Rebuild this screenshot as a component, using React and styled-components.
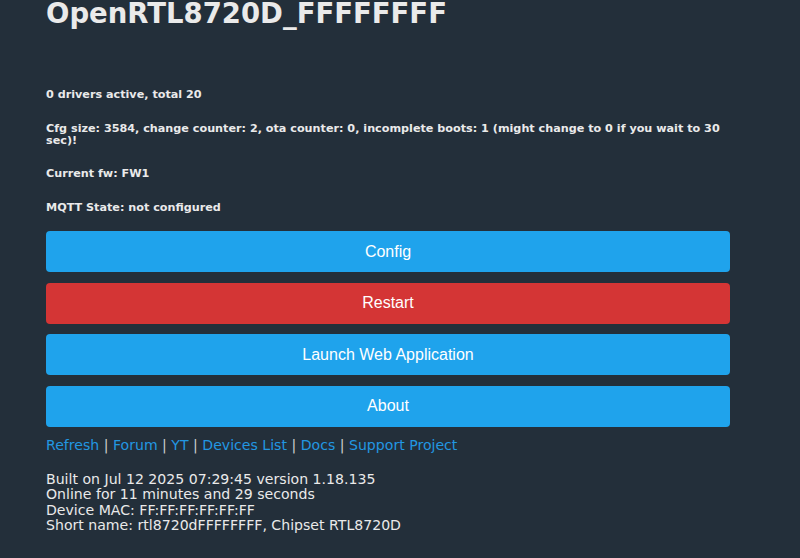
import React from "react";
import styled, { createGlobalStyle } from "styled-components";

const Global = createGlobalStyle`
  html, body { margin: 0; padding: 0; background: #232f3a; }
  body { font-family: "DejaVu Sans", Verdana, sans-serif; color: #eaeaea; }
`;

const Page = styled.div`
  width: 684px;
  padding: 0 0 0 46px;
  display: flex;
  flex-direction: column;
`;

const Title = styled.h1`
  margin: -2px 0 0 0;
  font-size: 27.5px;
  line-height: 30px;
  font-weight: bold;
  color: #eaeaea;
`;

const Status = styled.div`
  display: flex;
  flex-direction: column;
  gap: 21.5px;
  margin-top: 61px;
`;

const StatusLine = styled.h5`
  margin: 0;
  font-size: 11.2px;
  line-height: 12px;
  font-weight: bold;
  color: #eaeaea;
`;

const Buttons = styled.div`
  display: flex;
  flex-direction: column;
  gap: 10.5px;
  margin-top: 17.5px;
`;

const Button = styled.button`
  height: 41px;
  border: 0;
  border-radius: 4px;
  background: ${(p) => (p.$danger ? "#d43535" : "#1fa3ec")};
  color: #fff;
  font-family: "Liberation Sans", Arial, sans-serif;
  font-size: 16px;
  cursor: pointer;
  padding: 0;
`;

const Links = styled.div`
  margin-top: 10px;
  font-size: 14.1px;
  line-height: 16px;
  color: #cfcfcf;
`;

const Link = styled.a`
  color: #2297e2;
  text-decoration: none;
`;

const Info = styled.div`
  margin-top: 19.5px;
  font-size: 14.1px;
  line-height: 15.4px;
  color: #eaeaea;
`;

const links = ["Refresh", "Forum", "YT", "Devices List", "Docs", "Support Project"];

export default function App() {
  return (
    <>
      <Global />
      <Page>
        <Title>OpenRTL8720D_FFFFFFFF</Title>
        <Status>
          <StatusLine>0 drivers active, total 20</StatusLine>
          <StatusLine>
            Cfg size: 3584, change counter: 2, ota counter: 0, incomplete boots: 1 (might change to 0 if you wait to 30 sec)!
          </StatusLine>
          <StatusLine>Current fw: FW1</StatusLine>
          <StatusLine>MQTT State: not configured</StatusLine>
        </Status>
        <Buttons>
          <Button>Config</Button>
          <Button $danger>Restart</Button>
          <Button>Launch Web Application</Button>
          <Button>About</Button>
        </Buttons>
        <Links>
          {links.map((l, i) => (
            <React.Fragment key={l}>
              {i > 0 && " | "}
              <Link href="#">{l}</Link>
            </React.Fragment>
          ))}
        </Links>
        <Info>
          Built on Jul 12 2025 07:29:45 version 1.18.135
          <br />
          Online for 11 minutes and 29 seconds
          <br />
          Device MAC: FF:FF:FF:FF:FF:FF
          <br />
          Short name: rtl8720dFFFFFFFF, Chipset RTL8720D
        </Info>
      </Page>
    </>
  );
}
